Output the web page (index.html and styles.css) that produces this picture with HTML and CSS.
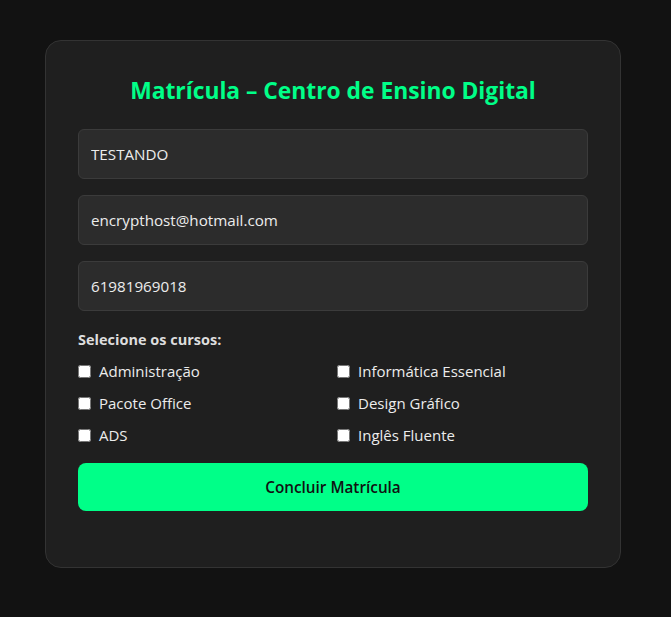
FILE: index.html
```html
<!DOCTYPE html>
<html lang="pt-BR">
<head>
<meta charset="utf-8">
<title>Matrícula – Centro de Ensino Digital</title>
<link rel="stylesheet" href="styles.css">
</head>
<body>
<div class="card">
  <h2 class="title">Matrícula – Centro de Ensino Digital</h2>
  <form class="form">
    <input class="field" type="text" value="TESTANDO">
    <input class="field" type="email" value="encrypthost@hotmail.com">
    <input class="field" type="tel" value="61981969018">
    <div class="label">Selecione os cursos:</div>
    <div class="courses">
      <label class="course"><input type="checkbox" class="check"><span>Administração</span></label>
      <label class="course"><input type="checkbox" class="check"><span>Informática Essencial</span></label>
      <label class="course"><input type="checkbox" class="check"><span>Pacote Office</span></label>
      <label class="course"><input type="checkbox" class="check"><span>Design Gráfico</span></label>
      <label class="course"><input type="checkbox" class="check"><span>ADS</span></label>
      <label class="course"><input type="checkbox" class="check"><span>Inglês Fluente</span></label>
    </div>
    <button type="button" class="submit">Concluir Matrícula</button>
  </form>
</div>
</body>
</html>
```
FILE: styles.css
```css
html, body {
  margin: 0;
  padding: 0;
  background: #121212;
  font-family: "Open Sans", "Noto Sans", sans-serif;
  color: #e6e6e6;
}
body {
  padding-top: 40px;
  height: 577px;
}
.card {
  box-sizing: border-box;
  width: 576px;
  margin-left: 45px;
  background: #1f1f1f;
  border: 1px solid #333;
  border-radius: 16px;
  padding: 35px 32px 56px;
}
.title {
  margin: 0 0 23px;
  font-size: 22.8px;
  line-height: 30px;
  font-weight: 700;
  color: #00ff88;
  text-align: center;
}
.form {
  display: flex;
  flex-direction: column;
}
.field {
  box-sizing: border-box;
  height: 50px;
  margin: 0 0 16px;
  padding: 0 12px;
  background: #2c2c2c;
  border: 1px solid #3b3b3b;
  border-radius: 6px;
  color: #ececec;
  font-family: inherit;
  font-size: 15.2px;
  outline: none;
}
.label {
  margin-top: 3px;
  font-size: 14.5px;
  line-height: 20px;
  font-weight: 700;
  color: #ddd;
}
.courses {
  display: grid;
  grid-template-columns: 1fr 1fr;
  column-gap: 8px;
  row-gap: 10px;
  margin-top: 10px;
}
.course {
  display: flex;
  align-items: center;
  gap: 8px;
  height: 22px;
  font-size: 15px;
  color: #ececec;
}
.check {
  margin: 0;
  width: 13px;
  height: 13px;
}
.submit {
  margin-top: 17px;
  height: 48px;
  border: none;
  border-radius: 8px;
  background: #00ff88;
  color: #111;
  font-family: inherit;
  font-size: 15.3px;
  font-weight: 600;
}
```
